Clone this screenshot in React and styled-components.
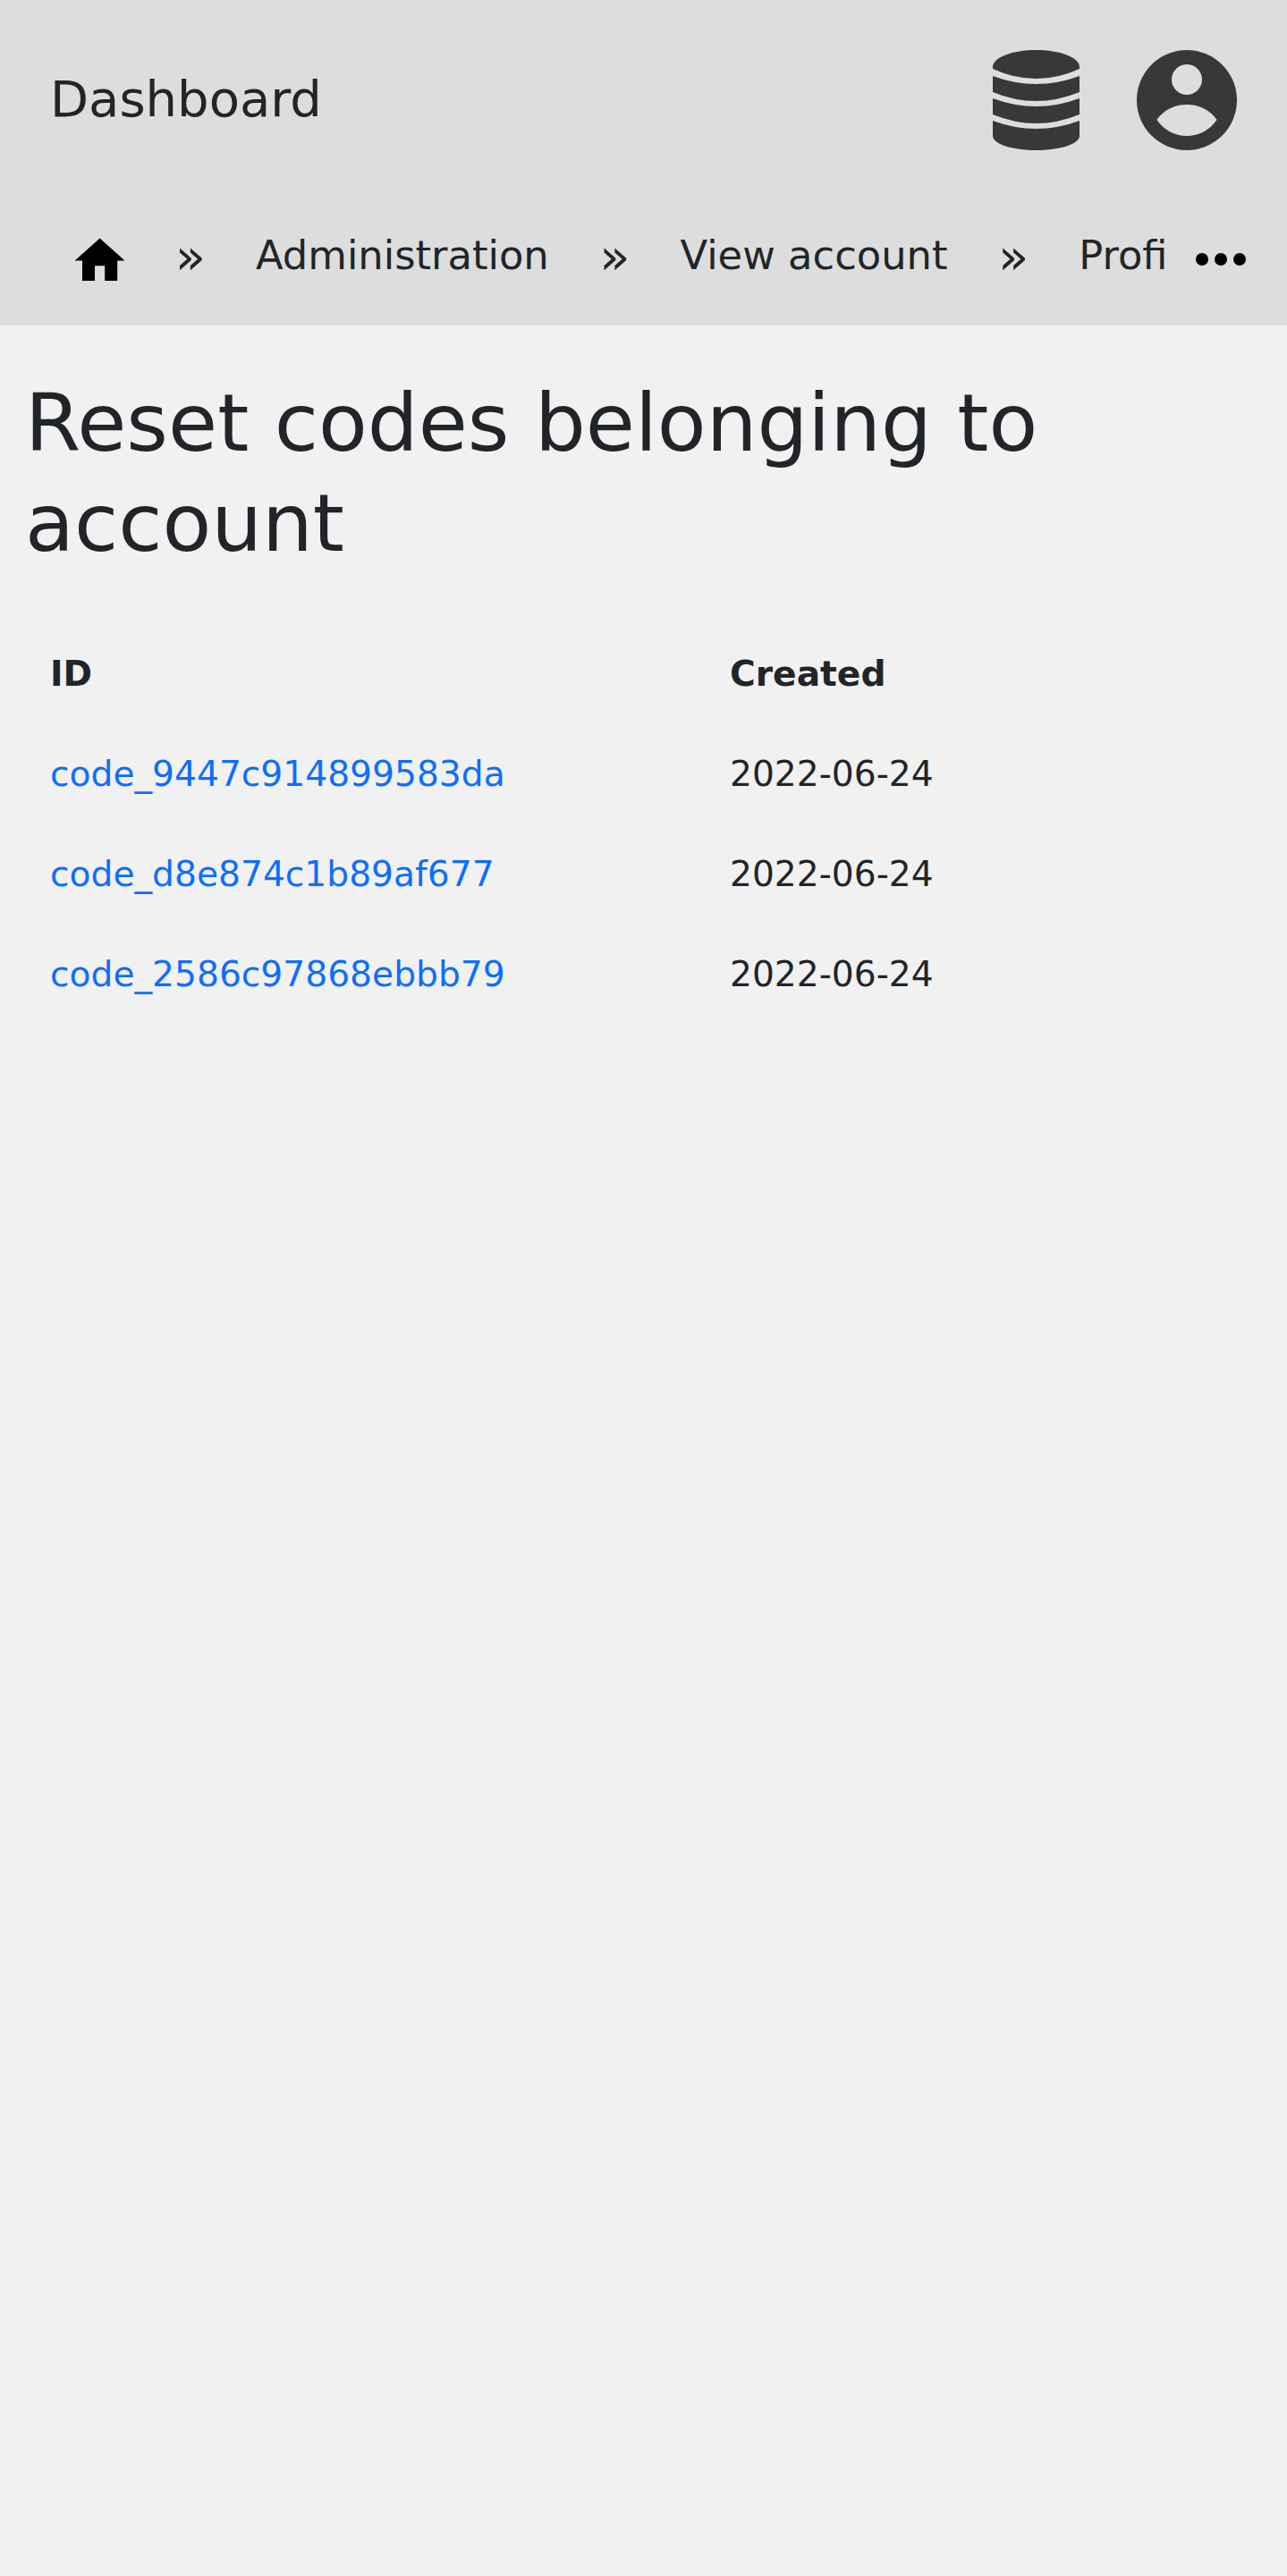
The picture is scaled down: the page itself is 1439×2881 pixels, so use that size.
import React from "react";
import styled, { createGlobalStyle } from "styled-components";
import { MdHome } from "react-icons/md";

const GlobalStyle = createGlobalStyle`
  html, body { margin: 0; padding: 0; }
  body {
    background: #f1f1f1;
    color: #212529;
    font-family: "DejaVu Sans", sans-serif;
    font-size: 39.2px;
    line-height: 1.5;
    min-height: 2881px;
  }
`;

const Header = styled.header`
  background: #dddddd;
  height: 364px;
  box-sizing: border-box;
`;

const TopRow = styled.div`
  height: 224px;
  display: flex;
  align-items: center;
  justify-content: space-between;
  padding: 0 56px;
`;

const Brand = styled.a`
  font-size: 56px;
  color: #212529;
  padding-bottom: 2px;
`;

const IconRow = styled.div`
  display: flex;
  align-items: center;
  gap: 64px;
  color: #383838;
  svg { display: block; }
`;

const Crumbs = styled.nav`
  height: 140px;
  box-sizing: border-box;
  display: flex;
  align-items: flex-start;
  padding: 28px 0 0 78px;
`;

const CrumbList = styled.ol`
  width: 1231px;
  flex: none;
  height: 84px;
  margin: 0;
  padding: 0;
  list-style: none;
  display: flex;
  align-items: flex-start;
  overflow: hidden;
  font-size: 44.8px;
  line-height: 67px;
  white-space: nowrap;
`;

const CrumbItem = styled.li`
  flex: none;
`;

const HomeItem = styled.li`
  flex: none;
  margin: 6px -6px 0 0;
  svg { display: block; color: #000; }
`;

const Separator = styled.li`
  flex: none;
  font-size: 56px;
  margin: 1px 56px 0 56.500px;
`;

const MoreDots = styled.svg`
  flex: none;
  display: block;
  margin: 31px 0 0 28px;
`;

const Title = styled.h1`
  font-size: 89.6px;
  font-weight: 400;
  line-height: 112px;
  margin: 0;
  padding: 53px 28px 0;
`;

const Table = styled.div`
  margin-top: 57px;
  padding: 0 56px;
`;

const Row = styled.div`
  display: grid;
  grid-template-columns: 760px 1fr;
  height: 112px;
  align-items: center;
`;

const HeadCell = styled.div`
  font-weight: 700;
`;

const CodeLink = styled.a`
  color: #0d6efd;
`;

const crumbs = ["Administration", "View account", "Profile"];

const rows = [
  ["code_9447c914899583da", "2022-06-24"],
  ["code_d8e874c1b89af677", "2022-06-24"],
  ["code_2586c97868ebbb79", "2022-06-24"],
];

function DatabaseIcon() {
  return (
    <svg width="97" height="112" viewBox="0 0 97 112" fill="currentColor">
      <path d="M0 19C0 8 22 0 48.500 0S97 8 97 19V21Q48.500 43 0 21Z" />
      <path d="M0 29Q48.500 47 97 29V47Q48.500 67 0 47Z" />
      <path d="M0 54Q48.500 72 97 54V72Q48.500 92 0 72Z" />
      <path d="M0 79Q48.500 97 97 79V96C97 105 75 112 48.500 112S0 105 0 96Z" />
    </svg>
  );
}

function UserIcon() {
  return (
    <svg width="112" height="112" viewBox="0 0 112 112" fill="currentColor">
      <path
        fillRule="evenodd"
        d="M56 0a56 56 0 1 0 0 112A56 56 0 0 0 56 0zM56 16a17 17 0 1 1 0 34a17 17 0 0 1 0-34zM22.500 78C30 67 42 61 56 61s26 6 33.500 17C82 89 70 96 56 96S30 89 22.500 78z"
      />
    </svg>
  );
}

export default function App() {
  return (
    <>
      <GlobalStyle />
      <Header>
        <TopRow>
          <Brand>Dashboard</Brand>
          <IconRow>
            <DatabaseIcon />
            <UserIcon />
          </IconRow>
        </TopRow>
        <Crumbs>
          <CrumbList>
            <HomeItem>
              <MdHome size={67.2} />
            </HomeItem>
            {crumbs.map((c) => (
              <React.Fragment key={c}>
                <Separator>»</Separator>
                <CrumbItem>{c}</CrumbItem>
              </React.Fragment>
            ))}
          </CrumbList>
          <MoreDots width="56" height="14" viewBox="0 0 56 14" fill="#000">
            <circle cx="7" cy="7" r="7" />
            <circle cx="28" cy="7" r="7" />
            <circle cx="49" cy="7" r="7" />
          </MoreDots>
        </Crumbs>
      </Header>
      <Title>Reset codes belonging to account</Title>
      <Table>
        <Row>
          <HeadCell>ID</HeadCell>
          <HeadCell>Created</HeadCell>
        </Row>
        {rows.map((r) => (
          <Row key={r[0]}>
            <CodeLink>{r[0]}</CodeLink>
            <div>{r[1]}</div>
          </Row>
        ))}
      </Table>
    </>
  );
}
